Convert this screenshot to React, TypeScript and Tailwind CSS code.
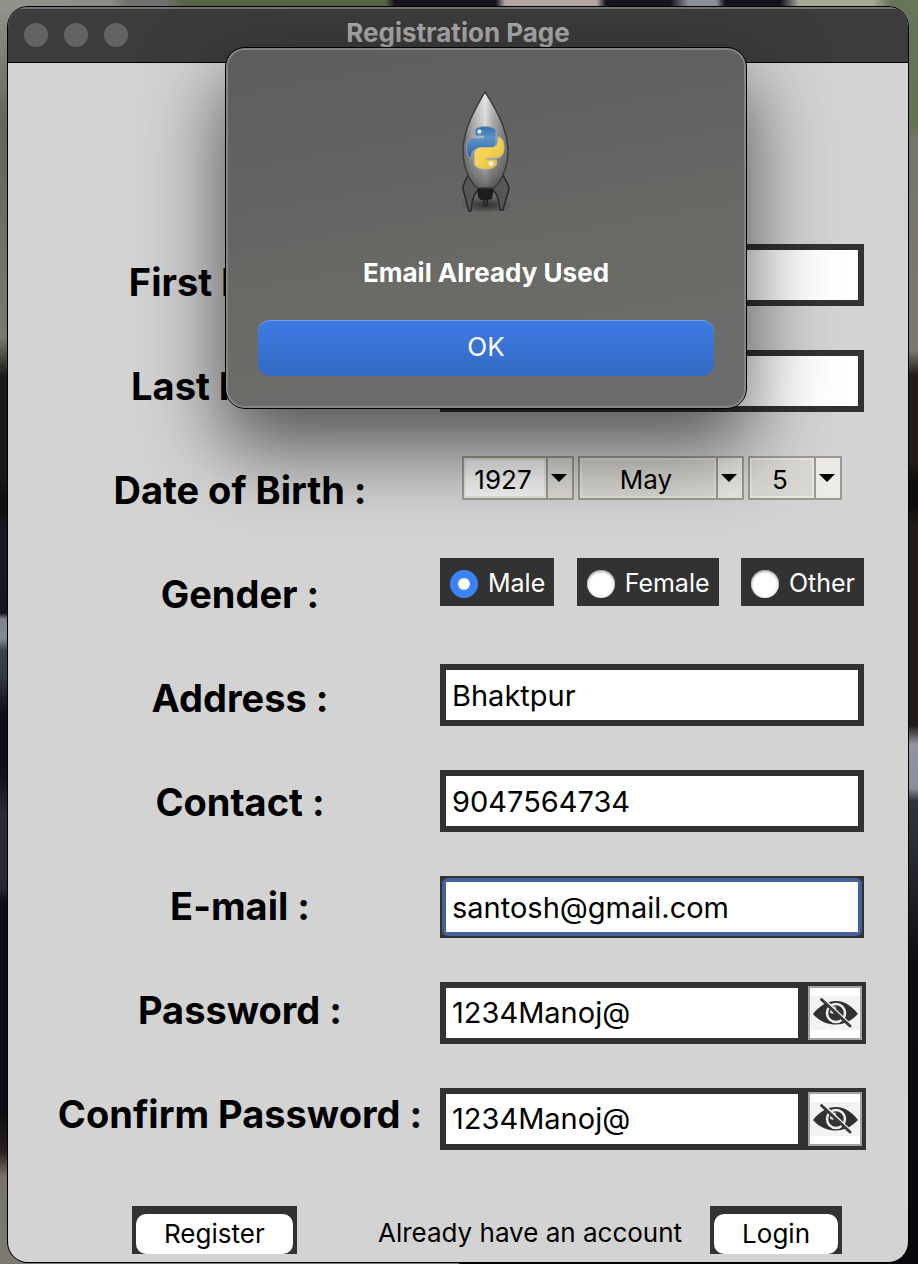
import { useState } from "react";
import type { ReactNode } from "react";

const LABELS: { id: string; text: string }[] = [
  { id: "first-name", text: "First Name :" },
  { id: "last-name", text: "Last Name :" },
  { id: "birth-year", text: "Date of Birth :" },
  { id: "gender-male", text: "Gender :" },
  { id: "address", text: "Address :" },
  { id: "contact", text: "Contact :" },
  { id: "email", text: "E-mail :" },
  { id: "password", text: "Password :" },
  { id: "confirm-password", text: "Confirm Password :" },
];

function Wallpaper() {
  return (
    <div aria-hidden="true" className="absolute inset-0 flex flex-col">
      <div className="h-3 bg-[linear-gradient(90deg,#92928a_0,#8c8c86_12%,#70706c_14%,#70706c_18%,#566447_20%,#566447_42%,#17141d_43%,#17141d_54%,#b5a8a2_55%,#b5a8a2_65%,#17141d_66%,#17141d_73%,#8c929c_75%,#8c929c_78%,#14121c_79%,#14121c_85%,#a8a898_87%,#a8a898_95%,#66755a_97%)]" />
      <div className="flex flex-1">
        <div className="flex-1 bg-[linear-gradient(180deg,#8f8f88_0,#65645c_9%,#7a7872_26%,#1e1a17_29%,#1c1815_37%,#0e0d0f_39%,#1a1a22_42%,#15151c_48%,#7f8290_48.5%,#858896_50%,#3a404c_51%,#343944_53%,#0e0e14_56%,#101018_61%,#2a2c33_64%,#26282e_70%,#0d0e14_71%,#0d0e14_88%,#2a1f1c_91%,#77736c_93%,#7d7a74_100%)]" />
        <div className="flex-1 bg-[linear-gradient(180deg,#66755a_0,#62714f_9%,#74736b_10%,#7a7871_27%,#241c18_29%,#241c18_36%,#0f0d0b_37.5%,#0f0d0b_39.5%,#231b17_41%,#231b17_57%,#9294a0_58.5%,#8a8c98_62%,#32343d_63%,#24252c_69%,#0d0d12_76%,#08080c_100%)]" />
      </div>
    </div>
  );
}

function TextField({ id, value, focused }: { id: string; value: string; focused?: boolean }) {
  const [text, setText] = useState(value);
  return (
    <div className="h-[62px] w-full bg-[#323232] p-0.5">
      <div className={focused ? "h-full rounded-md bg-[#44639a] p-1" : "h-full p-1"}>
        <input
          id={id}
          type="text"
          value={text}
          onChange={(e) => setText(e.target.value)}
          className="block h-full w-full bg-white px-1.5 text-[29px] text-black outline-none"
        />
      </div>
    </div>
  );
}

function EyeOff() {
  return (
    <svg viewBox="0 0 50 34" className="h-[34px] w-[50px] bg-[#f2f2f2]" aria-hidden="true">
      <path d="M3 18C10 9 18 5 26 5s15 4 22 13C41 25 34 28.500 26 28.500S10 26 3 18Z" fill="#303030" />
      <circle cx="26" cy="17" r="9" fill="#343434" stroke="#ededed" strokeWidth="2.500" />
      <path d="M20 17c0-4 2-6.500 5.500-6.500l1 4.500-3 3Z" fill="#dcdcdc" />
      <path d="m23 17 3-3 3 4-2 3Z" fill="#303030" />
      <path d="m14 3 26 25" stroke="#f2f2f2" strokeWidth="2" />
      <path d="m11.500 3.500 28.500 26.500" stroke="#3a3a3a" strokeWidth="3" strokeLinecap="round" />
    </svg>
  );
}

function SecretField({ id, value }: { id: string; value: string }) {
  const [text, setText] = useState(value);
  return (
    <div className="-mr-0.5 flex h-[62px] items-stretch bg-[#323232] py-1 pl-1.5 pr-1">
      <input
        id={id}
        type="text"
        value={text}
        onChange={(e) => setText(e.target.value)}
        className="my-0.5 min-w-0 flex-1 bg-white px-1.5 text-[29px] text-black outline-none"
      />
      <button
        type="button"
        aria-label="Toggle visibility"
        className="ml-2.5 flex w-[54px] items-center justify-center border-2 border-[#a3a3a3] bg-white"
      >
        <EyeOff />
      </button>
    </div>
  );
}

function Picker({ id, label, value, className, face, arrow }: {
  id: string; label: string; value: string; className: string; face: string; arrow: string;
}) {
  return (
    <div className={`relative flex h-11 border-2 border-[#9d9a92] ${className}`}>
      <select
        id={id}
        aria-label={label}
        defaultValue={value}
        className={`min-w-0 flex-1 appearance-none border-2 border-[#e6e5df] pb-0.5 pr-1 text-[26px] text-black outline-none [text-align-last:center] ${face}`}
      >
        <option>{value}</option>
      </select>
      <span className={`pointer-events-none flex w-[26px] items-center justify-center border-l-2 border-[#9d9a92] pr-0.5 ${arrow}`}>
        <svg viewBox="0 0 16 8" className="h-2 w-4" aria-hidden="true">
          <path d="M0 0h16L8 8Z" fill="#000" />
        </svg>
      </span>
    </div>
  );
}

function GenderOption({ label, checked, onSelect }: { label: string; checked: boolean; onSelect: () => void }) {
  return (
    <label className="flex h-12 items-center gap-2.5 bg-[#323232] pl-2.5 pr-[9px] pt-1 text-[25px] text-white">
      <input
        id={`gender-${label.toLowerCase()}`}
        type="radio"
        name="gender"
        checked={checked}
        onChange={onSelect}
        className="size-7 appearance-none rounded-full bg-white shadow-[inset_0_1px_3px_#777] checked:border-8 checked:border-[#3b82f7] checked:shadow-none"
      />
      {label}
    </label>
  );
}

function Rocket() {
  return (
    <svg viewBox="0 0 60 128" className="h-32 w-[60px]" aria-hidden="true">
      <defs>
        <linearGradient id="hull" x1="0" x2="1">
          <stop offset="0" stopColor="#666" />
          <stop offset=".22" stopColor="#aaa" />
          <stop offset=".5" stopColor="#e2e2e2" />
          <stop offset=".65" stopColor="#adadad" />
          <stop offset="1" stopColor="#686868" />
        </linearGradient>
        <linearGradient id="shade" x1="0" y1="0" x2="0" y2="1">
          <stop offset="0" stopColor="#fff" stopOpacity=".3" />
          <stop offset=".45" stopColor="#888" stopOpacity=".1" />
          <stop offset="1" stopColor="#333" stopOpacity=".7" />
        </linearGradient>
        <linearGradient id="snake-blue" x1="0" y1="0" x2="0" y2="1">
          <stop offset="0" stopColor="#356fae" />
          <stop offset=".35" stopColor="#5b95cc" />
          <stop offset="1" stopColor="#2e609c" />
        </linearGradient>
        <linearGradient id="snake-yellow" x1="0" y1="0" x2="1" y2="1">
          <stop offset="0" stopColor="#f9df69" />
          <stop offset=".5" stopColor="#f4d151" />
          <stop offset="1" stopColor="#ddb43c" />
        </linearGradient>
        <radialGradient id="ground">
          <stop offset="0" stopColor="#222" stopOpacity=".8" />
          <stop offset="1" stopColor="#222" stopOpacity="0" />
        </radialGradient>
      </defs>
      <ellipse cx="30" cy="119" rx="27" ry="8" fill="url(#ground)" />
      <path d="M12 89c-2 5-5 9-5 14 2 8 3 12 6 22h2c1-12 3-19 8-21V98ZM47 89c2 5 6 9 6 14-2 8-4 12-6 21h-3c-1-11-3-18-8-20V98Z" fill="#565656" stroke="#282828" strokeWidth="1.5" />
      <path d="M27.500 107h4v13h-4Z" fill="#343434" stroke="#222" />
      <path d="M21 101h17l-2 12-5 1h-6l-3-3Z" fill="#1c1c1c" />
      <path d="M29 6C22 18 7 42 7 65c0 17 7 31 14 37h17c7-7 14-20 14-37C52 42 37 18 29 6Z" fill="url(#hull)" />
      <path d="M29 6C22 18 7 42 7 65c0 17 7 31 14 37h17c7-7 14-20 14-37C52 42 37 18 29 6Z" fill="url(#shade)" stroke="#3a3a3a" strokeWidth="1.400" />
      <path d="M19 45c0-3 4-4.500 10-4.500s11 1.500 11 5V56c0 4-3 6.500-7 6.500H23c-5 0-7.500 3-7.500 8v1.500c-4-1-5-5-5-10.500 0-6 3-9.500 8-9.500H28v-2h-9Z" fill="url(#snake-blue)" stroke="#8fa5b9" strokeWidth="1" />
      <path d="M42 51c4 1 6 4 6 10.500 0 7-3 10.500-8 10.500H30v2h10.500v3c0 4-5 6-11 6s-11-2-11-6V68c0-4 3-6.500 7.500-6.500h9c5 0 7-3 7-7Z" fill="url(#snake-yellow)" stroke="#c6bd93" strokeWidth="1" />
      <circle cx="23.500" cy="45.500" r="2" fill="#fff" />
      <circle cx="35" cy="77.500" r="2.200" fill="#fff" />
    </svg>
  );
}

function TkButton({ children, href }: { children: ReactNode; href?: string }) {
  const face = "flex h-10 items-center justify-center rounded-[10px] bg-white px-7 pb-0.5 text-[26px] text-black";
  return (
    <div className="h-12 bg-[#323232] px-1 pt-2">
      {href ? <a href={href} className={face}>{children}</a> : <button type="submit" className={face}>{children}</button>}
    </div>
  );
}

function AlertDialog() {
  return (
    <div
      role="alertdialog"
      aria-labelledby="alert-title"
      className="absolute left-[225px] top-[47px] flex w-[522px] flex-col items-center rounded-[20px] border border-black bg-[linear-gradient(170deg,#5e5e5e_0%,#626262_30%,#6a6a66_60%,#6c6c6c_100%)] px-8 pb-8 pt-[38px] shadow-[inset_0_0_0_2px_#858585,0_36px_80px_4px_rgba(0,0,0,0.6)]"
    >
      <Rocket />
      <h2 id="alert-title" className="mt-[43px] text-[26px] font-bold leading-8 text-white">Email Already Used</h2>
      <button
        type="button"
        className="mt-[31px] h-14 w-full rounded-xl bg-linear-to-b from-[#3d7be3] to-[#3369c2] pb-1 text-[26px] text-white shadow-[inset_0_1px_0_#6c9cee]"
      >
        OK
      </button>
    </div>
  );
}

export default function App() {
  const [gender, setGender] = useState("Male");
  return (
    <div className="relative min-h-screen bg-[#15151a] pb-0.5 pl-2 pr-2.5 pt-[7px] font-['Inter',sans-serif]">
      <Wallpaper />
      <main className="relative overflow-hidden rounded-[20px] bg-[#d3d3d3] shadow-[0_0_0_1px_#000]">
        <header className="relative flex h-14 items-center justify-center border-b border-black bg-[#3c3c3c] shadow-[inset_0_2px_0_#737373]">
          <div className="absolute left-4 flex gap-4" aria-hidden="true">
            <span className="size-6 rounded-full bg-[#626262]" />
            <span className="size-6 rounded-full bg-[#626262]" />
            <span className="size-6 rounded-full bg-[#626262]" />
          </div>
          <h1 className="pb-1 text-[26px] font-bold leading-8 text-[#a9a9a9]">Registration Page</h1>
        </header>

        <form onSubmit={(e) => e.preventDefault()}>
          <div className="flex gap-4 pl-12 pr-11 pt-[167px]">
            <div className="flex w-[368px] shrink-0 flex-col">
              {LABELS.map((l) => (
                <label
                  key={l.id}
                  htmlFor={l.id}
                  className="flex h-[104px] items-start justify-center whitespace-nowrap pt-7 text-[38px] font-bold leading-12 text-black"
                >
                  {l.text}
                </label>
              ))}
            </div>
            <div className="flex min-w-0 flex-1 flex-col pt-3.5">
              <div className="h-[106px]"><TextField id="first-name" value="" /></div>
              <div className="h-[106px]"><TextField id="last-name" value="" /></div>
              <div className="flex h-[102px] items-start gap-1 pl-[22px]">
                <Picker id="birth-year" label="Year" value="1927" className="w-28" face="bg-[#f6f6f6]" arrow="bg-[#dddbd4]" />
                <Picker id="birth-month" label="Month" value="May" className="w-[166px]" face="bg-[#d9d8d3]" arrow="bg-[#e8e7e2]" />
                <Picker id="birth-day" label="Day" value="5" className="w-[94px]" face="bg-[#d9d8d4]" arrow="bg-[#ecebe5]" />
              </div>
              <div className="flex h-[106px] items-start justify-between" role="radiogroup" aria-label="Gender">
                {["Male", "Female", "Other"].map((g) => (
                  <GenderOption key={g} label={g} checked={gender === g} onSelect={() => setGender(g)} />
                ))}
              </div>
              <div className="h-[106px]"><TextField id="address" value="Bhaktpur" /></div>
              <div className="h-[106px]"><TextField id="contact" value="9047564734" /></div>
              <div className="h-[106px]"><TextField id="email" value="santosh@gmail.com" focused /></div>
              <div className="h-[106px]"><SecretField id="password" value="1234Manoj@" /></div>
              <div><SecretField id="confirm-password" value="1234Manoj@" /></div>
            </div>
          </div>
          <div className="flex items-center pb-2 pl-[124px] pr-[66px] pt-10">
            <TkButton>Register</TkButton>
            <p className="ml-auto mr-7 pt-1 text-[26px] text-black">Already have an account</p>
            <TkButton href="#login">Login</TkButton>
          </div>
        </form>
      </main>
      <AlertDialog />
    </div>
  );
}
